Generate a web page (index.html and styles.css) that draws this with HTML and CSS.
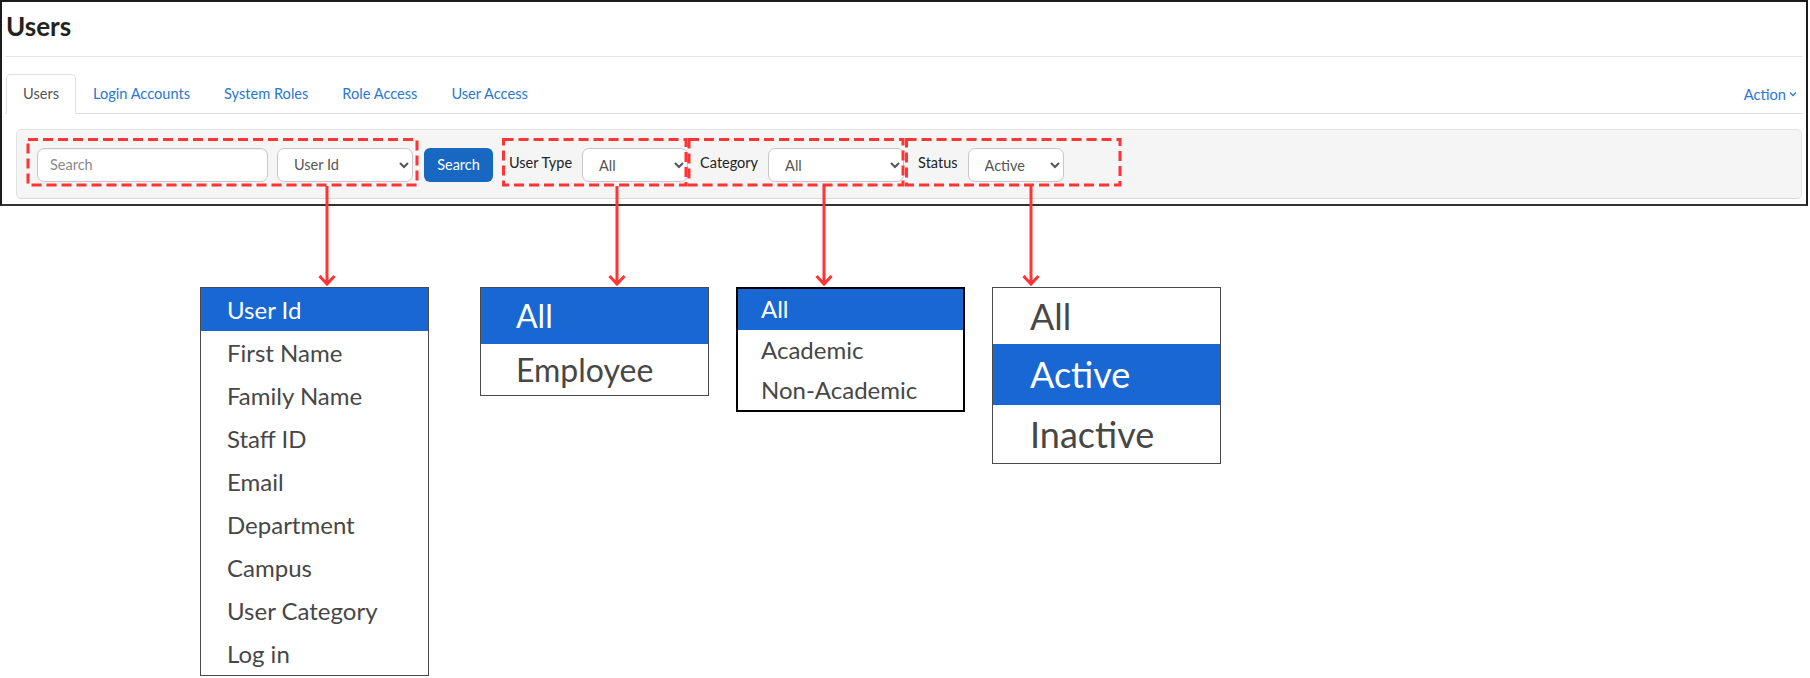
FILE: index.html
```html
<!DOCTYPE html>
<html lang="en">
  <head>
    <meta charset="UTF-8" />
    <meta name="viewport" content="width=device-width, initial-scale=1.0" />
    <title>Users</title>
    <link rel="stylesheet" href="styles.css">
  </head>
  <body>
    <div class="frame">
      <header class="page-head">
        <h1>Users</h1>
      </header>

      <nav class="tabs">
        <a class="tab active">Users</a>
        <a class="tab">Login Accounts</a>
        <a class="tab">System Roles</a>
        <a class="tab">Role Access</a>
        <a class="tab">User Access</a>
        <a class="action">
          Action
          <svg width="8" height="6" viewBox="0 0 8 6"><path d="M1 1.5 4 4.5 7 1.5" fill="none" stroke="#2a78d1" stroke-width="1.3"/></svg>
        </a>
      </nav>

      <div class="filter-bar">
        <input class="search-input" type="text" placeholder="Search" />
        <select class="field-select by-field">
          <option>User Id</option>
        </select>
        <button class="btn-search">Search</button>

        <div class="filter filter-type">
          <label>User Type</label>
          <select class="field-select type-select">
            <option>All</option>
          </select>
        </div>
        <div class="filter filter-category">
          <label>Category</label>
          <select class="field-select category-select">
            <option>All</option>
          </select>
        </div>
        <div class="filter filter-status">
          <label>Status</label>
          <select class="field-select status-select">
            <option>Active</option>
          </select>
        </div>
      </div>
    </div>

    <!-- the open dropdowns, one under each control -->
    <div class="callouts">
      <ul class="option-list list-field">
        <li class="selected">User Id</li>
        <li>First Name</li>
        <li>Family Name</li>
        <li>Staff ID</li>
        <li>Email</li>
        <li>Department</li>
        <li>Campus</li>
        <li>User Category</li>
        <li>Log in</li>
      </ul>
      <ul class="option-list list-type">
        <li class="selected">All</li>
        <li>Employee</li>
      </ul>
      <ul class="option-list list-category">
        <li class="selected">All</li>
        <li>Academic</li>
        <li>Non-Academic</li>
      </ul>
      <ul class="option-list list-status">
        <li>All</li>
        <li class="selected">Active</li>
        <li>Inactive</li>
      </ul>
    </div>

    <!-- red markup: dashed boxes round the controls and arrows down to the lists -->
    <svg class="markup" width="1810" height="678" viewBox="0 0 1810 678">
      <g fill="none" stroke="#ff3535" stroke-width="3" stroke-dasharray="10 5">
        <rect x="28" y="139.5" width="389" height="45.5" />
        <rect x="503.5" y="139.5" width="182.5" height="45.5" />
        <rect x="689" y="139.5" width="214" height="45.5" />
        <rect x="906.5" y="139.5" width="213.5" height="45.5" />
      </g>
      <g fill="none" stroke="#ff3535" stroke-width="3">
        <path d="M327 186V283M319.5 276 327 284 334.5 276" />
        <path d="M617 186V283M609.5 276 617 284 624.5 276" />
        <path d="M824 186V283M816.5 276 824 284 831.5 276" />
        <path d="M1031 186V283M1023.5 276 1031 284 1038.5 276" />
      </g>
    </svg>
  </body>
</html>
```

FILE: styles.css
```css
body {
  margin: 0;
  width: 1810px;
  height: 678px;
  overflow: hidden;
  background: #fff;
  font-family: Lato, "Open Sans", sans-serif;
  position: relative;
}

.frame {
  box-sizing: border-box;
  width: 1808px;
  border: 2px solid #1c1c1c;
  border-bottom-color: #333;
  padding: 0 3px 5px 3px;
}

.page-head {
  padding-bottom: 14px;
  border-bottom: 1px solid #e4e4e4;
}

h1 {
  margin: 8px 0 0 1px;
  font-size: 26px;
  line-height: 32px;
  font-weight: 700;
  color: #222;
}

/* tabs */
.tabs {
  display: flex;
  align-items: flex-end;
  margin-top: 17px;
  border-bottom: 1px solid #dedede;
}

.tab {
  height: 38px;
  line-height: 37px;
  padding: 0 16px;
  margin-bottom: -1px;
  border: 1px solid transparent;
  border-radius: 5px 5px 0 0;
  font-size: 14.6px;
  color: #2a78d1;
}

.tab:first-child {
  margin-left: 1px;
}

.tab.active {
  color: #555;
  background: #fff;
  border-color: #e0e0e0;
  border-bottom-color: #fff;
}

.action {
  margin-left: auto;
  margin-right: 6px;
  align-self: center;
  font-size: 14.7px;
  color: #2a78d1;
  display: flex;
  align-items: center;
  gap: 3px;
}

/* filter bar */
.filter-bar {
  display: flex;
  align-items: center;
  margin: 15px 1px 0 11px;
  padding: 17px 20px 16px 20px;
  background: #f5f5f5;
  border: 1px solid #e3e3e3;
  border-bottom-color: #d9d9d9;
  border-radius: 5px;
}

.search-input {
  box-sizing: border-box;
  width: 231px;
  height: 34px;
  padding: 0 12px;
  border: 1px solid #c8c8c8;
  border-radius: 7px;
  font-family: Lato, sans-serif;
  font-size: 14.5px;
  color: #555;
  background: #fff;
  box-shadow: inset 0 1px 1px rgba(0, 0, 0, 0.06);
}

.search-input::placeholder {
  color: #8a8a8a;
}

.field-select {
  box-sizing: border-box;
  height: 34px;
  padding: 0 6px 0 12px;
  border: 1px solid #c8c8c8;
  border-radius: 7px;
  background: #fff;
  font-family: Lato, sans-serif;
  font-size: 14.5px;
  color: #555;
}

.by-field {
  width: 136px;
  margin-left: 9px;
}

.btn-search {
  width: 69px;
  height: 34px;
  margin-left: 11px;
  border: 0;
  border-radius: 6px;
  background: #1868c1;
  color: #fff;
  font-family: Lato, sans-serif;
  font-size: 14.5px;
}

.filter {
  display: flex;
  align-items: center;
  gap: 10px;
}

.filter label {
  font-size: 14.5px;
  color: #222;
  padding-bottom: 4px;
}

.filter-type {
  margin-left: 16px;
}

.filter-category {
  margin-left: 12px;
}

.filter-status {
  margin-left: 14px;
}

.type-select {
  width: 106px;
  margin-top: 1px;
}

.category-select {
  width: 136px;
  margin-top: 1px;
}

.status-select {
  width: 96px;
  margin-top: 1px;
}

/* open option lists */
.callouts {
  display: flex;
  align-items: flex-start;
  gap: 27px;
  margin-top: 81px;
  padding-left: 200px;
}

.option-list {
  box-sizing: border-box;
  width: 229px;
  margin: 0;
  padding: 0;
  list-style: none;
  background: #fff;
  border: 1px solid #4a4a4a;
  color: #474747;
}

.option-list li {
  white-space: nowrap;
}

.option-list .selected {
  background: #1967d2;
  color: #fff;
}

.list-field {
  margin-right: 24px;
}

.list-field li {
  height: 43px;
  line-height: 43px;
  padding-left: 26px;
  font-size: 24px;
}

.list-type li {
  height: 51px;
  line-height: 51px;
  padding-left: 35px;
  font-size: 32px;
}

.list-type li.selected {
  height: 56px;
  line-height: 56px;
}

.list-category {
  border: 2px solid #000;
}

.list-category li {
  height: 40px;
  line-height: 40px;
  padding-left: 23px;
  font-size: 24px;
}

.list-category li.selected {
  height: 41px;
}

.list-status li {
  height: 58px;
  line-height: 58px;
  padding-left: 37px;
  font-size: 36px;
}

.list-status li:first-child {
  height: 56px;
  line-height: 56px;
}

.list-status li.selected {
  height: 61px;
  line-height: 61px;
}

.markup {
  position: absolute;
  left: 0;
  top: 0;
  pointer-events: none;
}
```
